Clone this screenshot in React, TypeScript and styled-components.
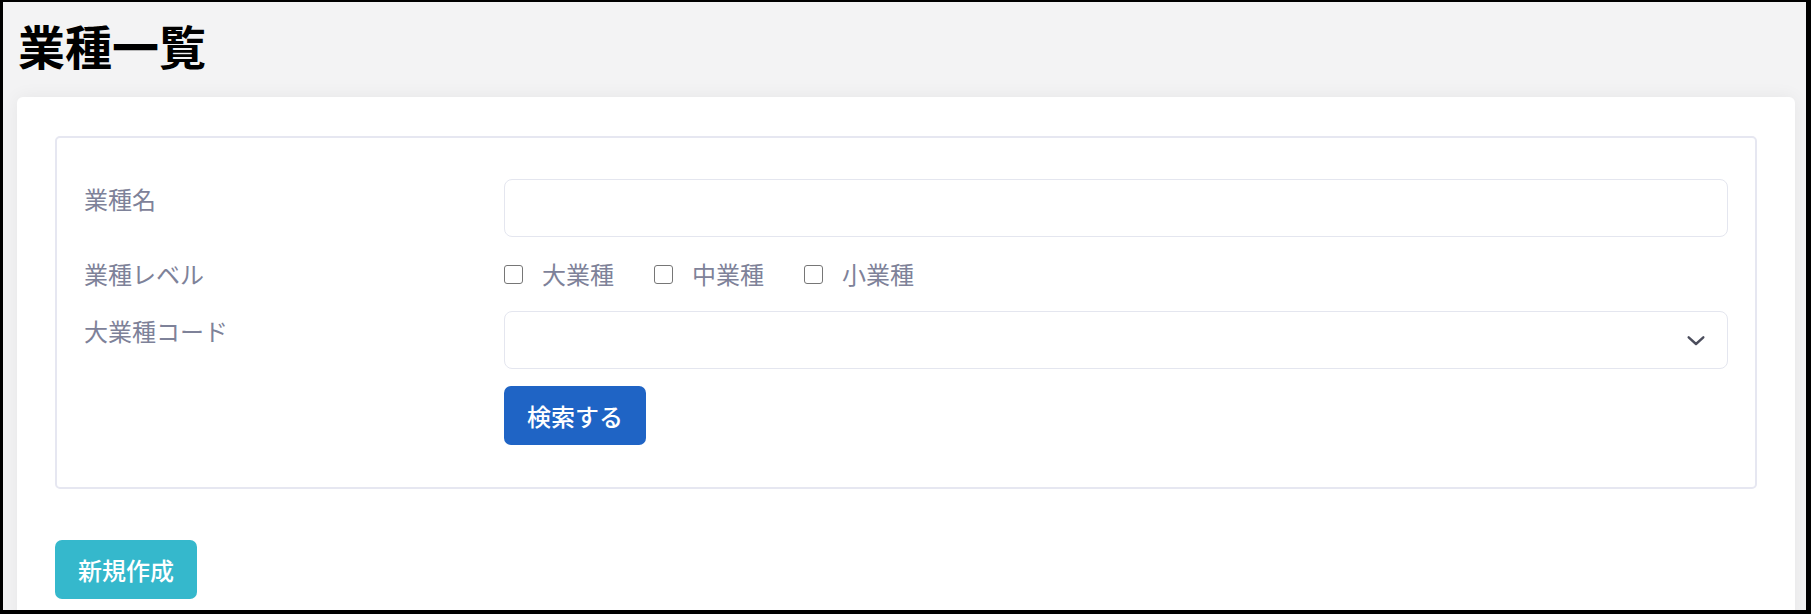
import React from "react";
import styled, { createGlobalStyle } from "styled-components";

const GlobalStyle = createGlobalStyle`
  html, body {
    margin: 0;
    padding: 0;
    background: #ffffff;
  }
  * {
    box-sizing: border-box;
  }
  body {
    font-family: "Noto Sans CJK JP", "Noto Sans", sans-serif;
  }
`;

const Frame = styled.div`
  width: 1811px;
  height: 614px;
  border-style: solid;
  border-color: #000000;
  border-width: 2px 5px 4px 3px;
  background: #f3f3f4;
  overflow: hidden;
  display: flex;
  flex-direction: column;
`;

const Title = styled.h1`
  margin: 20px 0 0 15px;
  font-size: 47px;
  line-height: 46px;
  font-weight: 700;
  color: #000000;
  letter-spacing: 0;
`;

const Card = styled.section`
  margin: 29px 11px 0 14px;
  background: #ffffff;
  border-radius: 6px;
  box-shadow: 0 0 18px rgba(0, 0, 0, 0.06);
  padding: 39px 38px;
  flex: 1 0 auto;
`;

const SearchBox = styled.div`
  border: 2px solid #e6e7f1;
  border-radius: 5px;
  padding: 41px 27px 42px 27px;
`;

const Form = styled.div`
  display: grid;
  grid-template-columns: 420px 1fr;
  row-gap: 19px;
  align-items: start;
`;

const Label = styled.label<{ $offset?: number }>`
  font-size: 24px;
  line-height: 36px;
  color: #7e8299;
  margin-top: ${(p) => p.$offset ?? 0}px;
`;

const TextInput = styled.input`
  display: block;
  width: 100%;
  height: 58px;
  border: 1.5px solid #e4e6ef;
  border-radius: 8px;
  background: #ffffff;
  font-size: 22px;
  padding: 0 18px;
  outline: none;
`;

const SelectWrap = styled.div`
  position: relative;
  width: 100%;
`;

const SelectBox = styled.select`
  display: block;
  width: 100%;
  height: 58px;
  border: 1.5px solid #e4e6ef;
  border-radius: 8px;
  background: #ffffff;
  font-size: 22px;
  padding: 0 18px;
  appearance: none;
  -webkit-appearance: none;
  outline: none;
`;

const Chevron = styled.svg`
  position: absolute;
  right: 21px;
  top: 50%;
  width: 22px;
  height: 16px;
  transform: translateY(-50%);
  pointer-events: none;
`;

const CheckGroup = styled.div`
  display: flex;
  align-items: center;
  gap: 40px;
  height: 36px;
`;

const CheckItem = styled.label`
  display: flex;
  align-items: center;
  gap: 19px;
  font-size: 24px;
  line-height: 36px;
  color: #7e8299;
`;

const CheckBoxSquare = styled.span`
  display: inline-block;
  width: 19px;
  height: 19px;
  border: 1.5px solid #767676;
  border-radius: 3px;
  background: #ffffff;
`;

const Button = styled.button<{ $variant: "primary" | "info" }>`
  display: inline-block;
  border: none;
  border-radius: 7px;
  padding: 11px 23px;
  font-family: "Noto Sans CJK JP", "Noto Sans", sans-serif;
  font-size: 24px;
  font-weight: 500;
  line-height: 37px;
  color: #ffffff;
  background: ${(p) => (p.$variant === "primary" ? "#1f64c5" : "#35b8cc")};
  cursor: pointer;
`;

const ActionCell = styled.div`
  grid-column: 2;
  margin-top: -2px;
`;

const Footer = styled.div`
  margin-top: 51px;
`;

export default function App() {
  return (
    <>
      <GlobalStyle />
      <Frame>
        <Title>業種一覧</Title>
        <Card>
          <SearchBox>
            <Form>
              <Label $offset={2}>業種名</Label>
              <TextInput type="text" />

              <Label>業種レベル</Label>
              <CheckGroup>
                {["大業種", "中業種", "小業種"].map((l) => (
                  <CheckItem key={l}>
                    <CheckBoxSquare />
                    {l}
                  </CheckItem>
                ))}
              </CheckGroup>

              <Label $offset={2}>大業種コード</Label>
              <SelectWrap>
                <SelectBox>
                  <option></option>
                </SelectBox>
                <Chevron viewBox="0 0 16 12" fill="none">
                  <path
                    d="M2.5 4l5.5 5 5.5-5"
                    stroke="#4b4d5c"
                    strokeWidth="1.8"
                    strokeLinecap="round"
                    strokeLinejoin="round"
                  />
                </Chevron>
              </SelectWrap>

              <ActionCell>
                <Button $variant="primary">検索する</Button>
              </ActionCell>
            </Form>
          </SearchBox>
          <Footer>
            <Button $variant="info">新規作成</Button>
          </Footer>
        </Card>
      </Frame>
    </>
  );
}
